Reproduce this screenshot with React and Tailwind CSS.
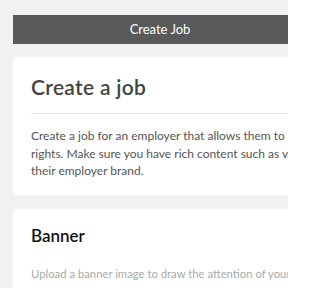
import React from "react";

const font = { fontFamily: "Lato, 'Noto Sans', sans-serif" };

const App = () => {
  return (
    <div className="w-[288px] h-[288px] overflow-hidden bg-[#f1f1f1]" style={font}>
      <div className="w-[294px] ml-[13px] pt-[15px]">
        {/* Top bar */}
        <div className="h-[29px] bg-[#58595b] flex items-center justify-center text-white text-[13px]">
          Create Job
        </div>

        {/* Intro card */}
        <section className="mt-[13px] bg-white rounded-[4px] px-[18px] pt-[17px] pb-[15px]">
          <h1 className="text-[21px] leading-[26px] font-semibold tracking-[0.3px] text-[#444]">
            Create a job
          </h1>
          <div className="mt-[13px] border-t border-[#e6e6e6]" />
          <div className="mt-[13px] text-[12px] leading-[17.5px] text-[#555] whitespace-nowrap">
            <p>Create a job for an employer that allows them to manage</p>
            <p>rights. Make sure you have rich content such as videos</p>
            <p>their employer brand.</p>
          </div>
        </section>

        {/* Banner card */}
        <section className="mt-[14px] bg-white rounded-[4px] px-[18px] pt-[17px] pb-[20px]">
          <h2 className="text-[17px] leading-[20px] font-semibold text-[#111]">
            Banner
          </h2>
          <p className="mt-[20px] text-[11.3px] leading-[16px] text-[#aaa] whitespace-nowrap">
            Upload a banner image to draw the attention of your candidates
          </p>
        </section>
      </div>
    </div>
  );
};

export default App;
